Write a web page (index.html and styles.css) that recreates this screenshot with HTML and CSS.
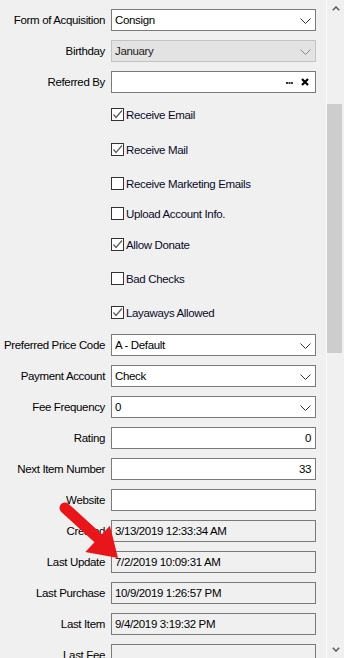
FILE: index.html
```html
<!DOCTYPE html>
<html>
<head>
    <title>Customer Details</title>
    <link rel="stylesheet" href="styles.css">
</head>
<body>
    <div class="window">
        <div class="form">
            <div class="row">
                <div class="label">Form of Acquisition</div>
                <div class="field">
                    <span class="value">Consign</span>
                    <svg class="chevron" width="11" height="6" viewBox="0 0 11 6"><polyline points="0.5,0.5 5.5,5.5 10.5,0.5"/></svg>
                </div>
            </div>
            <div class="row">
                <div class="label">Birthday</div>
                <div class="field disabled">
                    <span class="value">January</span>
                    <svg class="chevron" width="11" height="6" viewBox="0 0 11 6"><polyline points="0.5,0.5 5.5,5.5 10.5,0.5"/></svg>
                </div>
            </div>
            <div class="row">
                <div class="label">Referred By</div>
                <div class="field">
                    <span class="value"></span>
                    <svg class="dots" width="7" height="2" viewBox="0 0 7 2"><rect x="0" y="0" width="2" height="2"/><rect x="2.5" y="0" width="2" height="2"/><rect x="5" y="0" width="2" height="2"/></svg>
                    <svg class="clear" width="8" height="8" viewBox="0 0 8 8"><path d="M1 1 L7 7 M7 1 L1 7"/></svg>
                </div>
            </div>

            <div class="checklist">
                <label class="check"><span class="box"><svg width="11" height="11" viewBox="0 0 11 11"><polyline points="1.5,5.5 4,8.5 10,1.5"/></svg></span>Receive Email</label>
                <label class="check"><span class="box"><svg width="11" height="11" viewBox="0 0 11 11"><polyline points="1.5,5.5 4,8.5 10,1.5"/></svg></span>Receive Mail</label>
                <label class="check"><span class="box"></span>Receive Marketing Emails</label>
                <label class="check"><span class="box"></span>Upload Account Info.</label>
                <label class="check"><span class="box"><svg width="11" height="11" viewBox="0 0 11 11"><polyline points="1.5,5.5 4,8.5 10,1.5"/></svg></span>Allow Donate</label>
                <label class="check"><span class="box"></span>Bad Checks</label>
                <label class="check"><span class="box"><svg width="11" height="11" viewBox="0 0 11 11"><polyline points="1.5,5.5 4,8.5 10,1.5"/></svg></span>Layaways Allowed</label>
            </div>

            <div class="row">
                <div class="label">Preferred Price Code</div>
                <div class="field">
                    <span class="value">A - Default</span>
                    <svg class="chevron" width="11" height="6" viewBox="0 0 11 6"><polyline points="0.5,0.5 5.5,5.5 10.5,0.5"/></svg>
                </div>
            </div>
            <div class="row">
                <div class="label">Payment Account</div>
                <div class="field">
                    <span class="value">Check</span>
                    <svg class="chevron" width="11" height="6" viewBox="0 0 11 6"><polyline points="0.5,0.5 5.5,5.5 10.5,0.5"/></svg>
                </div>
            </div>
            <div class="row">
                <div class="label">Fee Frequency</div>
                <div class="field">
                    <span class="value">0</span>
                    <svg class="chevron" width="11" height="6" viewBox="0 0 11 6"><polyline points="0.5,0.5 5.5,5.5 10.5,0.5"/></svg>
                </div>
            </div>
            <div class="row">
                <div class="label">Rating</div>
                <div class="field number"><span class="value">0</span></div>
            </div>
            <div class="row">
                <div class="label">Next Item Number</div>
                <div class="field number"><span class="value">33</span></div>
            </div>
            <div class="row">
                <div class="label">Website</div>
                <div class="field"><span class="value"></span></div>
            </div>
            <div class="row">
                <div class="label">Created</div>
                <div class="field readonly"><span class="value">3/13/2019 12:33:34 AM</span></div>
            </div>
            <div class="row">
                <div class="label">Last Update</div>
                <div class="field readonly"><span class="value">7/2/2019 10:09:31 AM</span></div>
            </div>
            <div class="row">
                <div class="label">Last Purchase</div>
                <div class="field readonly"><span class="value">10/9/2019 1:26:57 PM</span></div>
            </div>
            <div class="row">
                <div class="label">Last Item</div>
                <div class="field readonly"><span class="value">9/4/2019 3:19:32 PM</span></div>
            </div>
            <div class="row">
                <div class="label">Last Fee</div>
                <div class="field readonly"><span class="value"></span></div>
            </div>
        </div>

        <div class="scrollbar">
            <div class="scroll-btn">
                <svg width="8" height="5" viewBox="0 0 8 5"><polyline points="0.8,4.2 4,1 7.2,4.2"/></svg>
            </div>
            <div class="track"><div class="thumb"></div></div>
            <div class="scroll-btn">
                <svg width="8" height="5" viewBox="0 0 8 5"><polyline points="0.8,0.8 4,4 7.2,0.8"/></svg>
            </div>
        </div>
    </div>

    <!-- callout pointing at the Last Update field -->
    <svg class="callout" width="344" height="658" viewBox="0 0 344 658">
        <line x1="65" y1="508" x2="99" y2="539"/>
        <polygon points="109.9,525.7 118,558 85.3,551.9"/>
    </svg>
</body>
</html>
```

FILE: styles.css
```css
body {
    margin: 0;
    background-color: #f0f0f0;
    font-family: "Liberation Sans", Arial, sans-serif;
    font-size: 11.5px;
    letter-spacing: -0.35px;
    color: #000;
    overflow: hidden;
    height: 658px;
}
.window {
    display: flex;
    height: 658px;
}
.form {
    width: 326px;
    padding-top: 9px;
    overflow: hidden;
}
.row {
    display: flex;
    align-items: center;
    height: 22px;
    margin-bottom: 9px;
}
.label {
    width: 105px;
    margin-right: 6px;
    text-align: right;
    white-space: nowrap;
}
.field {
    width: 205px;
    height: 22px;
    box-sizing: border-box;
    border: 1px solid #7a7a7a;
    background-color: #fff;
    display: flex;
    align-items: center;
    padding: 0 4px 0 3px;
}
.field .value {
    flex: 1;
    white-space: nowrap;
}
.field.number .value {
    text-align: right;
}
.field.disabled {
    background-color: #e3e3e3;
    border-color: #c3c3c3;
    color: #222;
}
.field.readonly {
    background-color: #f0f0f0;
}
.chevron {
    fill: none;
    stroke: #333;
    stroke-width: 1;
    margin-top: 1px;
}
.field.disabled .chevron {
    stroke: #888;
}
.dots {
    fill: #333;
    margin: 1px 8px 0 0;
}
.clear {
    fill: none;
    stroke: #000;
    stroke-width: 2.2;
    margin-right: 2px;
}
.checklist {
    display: grid;
    grid-template-rows: 35px 34px 30px 31px 34px 34px 28px;
    align-items: start;
    padding: 6px 0 0 111px;
}
.check {
    display: flex;
    align-items: center;
    height: 13px;
    gap: 2px;
    color: #0a0a28;
}
.box {
    width: 13px;
    height: 13px;
    box-sizing: border-box;
    border: 1px solid #333;
    background-color: #fff;
    display: flex;
}
.box svg {
    fill: none;
    stroke: #5a5a5a;
    stroke-width: 1.2;
}
.scrollbar {
    width: 17px;
    border-left: 1px solid #fbfbfb;
    display: flex;
    flex-direction: column;
}
.scroll-btn {
    height: 17px;
    display: flex;
    align-items: center;
    justify-content: center;
}
.scroll-btn svg {
    fill: none;
    stroke: #606060;
    stroke-width: 1.6;
}
.track {
    flex: 1;
}
.thumb {
    width: 15px;
    height: 249px;
    margin: 87px 1px 0 0;
    background-color: #cdcdcd;
}
.callout {
    position: absolute;
    left: 0;
    top: 0;
    pointer-events: none;
}
.callout line {
    stroke: #e8151b;
    stroke-width: 11;
    stroke-linecap: round;
}
.callout polygon {
    fill: #e8151b;
}
```
